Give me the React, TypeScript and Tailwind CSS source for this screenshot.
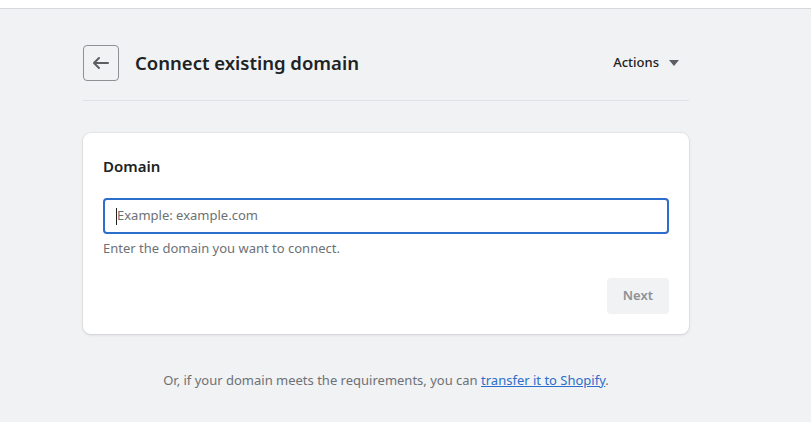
import React from 'react';

const App: React.FC = () => {
  return (
    <div className="min-h-[422px] bg-[#f1f2f4] text-[#202223]" style={{ fontFamily: '"Noto Sans", sans-serif' }}>
      {/* Top bar */}
      <div className="h-[9px] bg-white border-b border-[#d5d9dd]" />

      <div className="w-[606px] ml-[83px]">
        {/* Header */}
        <div className="flex items-center pt-[36px] pb-[19px] border-b border-[#dfe3e8]">
          <button className="w-9 h-9 rounded-[4px] border border-[#8c9196] flex items-center justify-center text-[#5c5f62]">
            <svg width="20" height="20" viewBox="0 0 20 20" fill="currentColor">
              <path d="M17 9H5.414l3.293-3.293a1 1 0 1 0-1.414-1.414l-5 5a1 1 0 0 0 0 1.414l5 5a1 1 0 0 0 1.414-1.414L5.414 11H17a1 1 0 1 0 0-2z" />
            </svg>
          </button>
          <h1 className="ml-4 text-[18.5px] font-semibold leading-7">Connect existing domain</h1>
          <button className="ml-auto mr-[10px] flex items-center text-[13px] font-medium">
            Actions
            <svg className="ml-[10px] text-[#5c5f62]" width="10" height="6" viewBox="0 0 10 6" fill="currentColor">
              <path d="M0 0h10L5 6z" />
            </svg>
          </button>
        </div>

        {/* Card */}
        <div className="mt-8 bg-white rounded-lg shadow-[0_0_0_1px_rgba(63,63,68,0.05),0_1px_3px_rgba(63,63,68,0.15)] p-5">
          <h2 className="text-[15px] font-semibold leading-6 pt-[1px]">Domain</h2>
          <div className="mt-[20px]">
            <div className="h-9 rounded-[4px] border-2 border-[#2c6ecb] flex items-center px-[11px]">
              <span className="w-px h-[17px] bg-[#202223]" />
              <span className="text-[13px] text-[#6d7175]">Example: example.com</span>
            </div>
            <p className="mt-1 text-[13px] text-[#6d7175] leading-5">Enter the domain you want to connect.</p>
          </div>
          <div className="flex justify-end mt-[20px]">
            <button className="h-9 px-4 rounded-[4px] bg-[#f1f2f3] text-[#8c9196] text-[13px] font-semibold">Next</button>
          </div>
        </div>

        {/* Footer */}
        <p className="mt-[36px] text-center text-[13px] leading-5 text-[#6d7175]">
          Or, if your domain meets the requirements, you can{' '}
          <a className="text-[#2c6ecb] underline">transfer it to Shopify</a>.
        </p>
      </div>
    </div>
  );
};

export default App;
